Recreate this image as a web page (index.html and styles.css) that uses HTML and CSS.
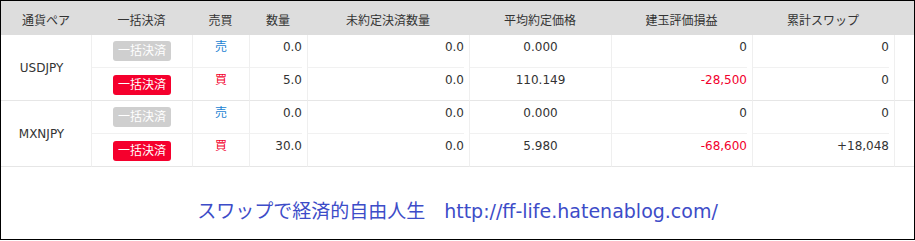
FILE: index.html
```html
<!DOCTYPE html>
<html lang="ja">
<head>
<meta charset="utf-8">
<title>建玉一覧</title>
<link rel="stylesheet" href="styles.css">
</head>
<body>
<div class="frame">
  <div class="grid">
    <div class="h">通貨ペア</div>
    <div class="h">一括決済</div>
    <div class="h">売買</div>
    <div class="h">数量</div>
    <div class="h">未約定決済数量</div>
    <div class="h">平均約定価格</div>
    <div class="h">建玉評価損益</div>
    <div class="h">累計スワップ</div>
    <div class="h"></div>

    <div class="pair">USDJPY</div>
    <div class="c top full"><span class="btn off">一括決済</span></div>
    <div class="c top full ctr sell">売</div>
    <div class="c top num">0.0</div>
    <div class="c top num">0.0</div>
    <div class="c top full ctr">0.000</div>
    <div class="c top num">0</div>
    <div class="c top num">0</div>
    <div class="c"></div>

    <div class="c bot"><span class="btn on">一括決済</span></div>
    <div class="c bot ctr buy">買</div>
    <div class="c bot num">5.0</div>
    <div class="c bot num">0.0</div>
    <div class="c bot ctr">110.149</div>
    <div class="c bot num neg">-28,500</div>
    <div class="c bot num">0</div>
    <div class="c bot"></div>

    <div class="pair">MXNJPY</div>
    <div class="c top full"><span class="btn off">一括決済</span></div>
    <div class="c top full ctr sell">売</div>
    <div class="c top num">0.0</div>
    <div class="c top num">0.0</div>
    <div class="c top full ctr">0.000</div>
    <div class="c top num">0</div>
    <div class="c top num">0</div>
    <div class="c"></div>

    <div class="c bot"><span class="btn on">一括決済</span></div>
    <div class="c bot ctr buy">買</div>
    <div class="c bot num">30.0</div>
    <div class="c bot num">0.0</div>
    <div class="c bot ctr">5.980</div>
    <div class="c bot num neg">-68,600</div>
    <div class="c bot num">+18,048</div>
    <div class="c bot"></div>
  </div>
  <p class="footer">スワップで経済的自由人生　http://ff-life.hatenablog.com/</p>
</div>
</body>
</html>
```
FILE: styles.css
```css
html, body {
  margin: 0;
  padding: 0;
  background: #fff;
}
body {
  width: 915px;
  height: 241px;
  font-family: "DejaVu Sans", "Noto Sans CJK JP", sans-serif;
  font-size: 12px;
  color: #333;
}
.frame {
  width: 915px;
  height: 240px;
  box-sizing: border-box;
  border: 1px solid #000;
}
.grid {
  display: grid;
  grid-template-columns: 90px 101px 57px 58px 162px 142px 141px 142px 1fr;
  grid-template-rows: 34px repeat(4, 33px);
}
.h {
  background: #dddddd;
  text-align: center;
  line-height: 17px;
  padding-top: 12px;
  box-sizing: border-box;
  color: #333;
}
.pair {
  grid-row: span 2;
  display: flex;
  align-items: center;
  justify-content: center;
  padding-right: 9px;
  border-bottom: 1px solid #e6e6e6;
  box-sizing: border-box;
}
.c {
  box-sizing: border-box;
  border-left: 1px solid #efefef;
  padding-top: 6px;
  line-height: 13px;
  text-align: center;
}
.c.top {
  background-image: linear-gradient(#f1f1f1, #f1f1f1);
  background-repeat: no-repeat;
  background-position: left bottom;
  background-size: calc(100% - 5px) 1px;
}
.c.top.full {
  background-size: 100% 1px;
}
.c.bot {
  border-bottom: 1px solid #e6e6e6;
}
.num {
  text-align: right;
  padding-right: 5px;
}
.ctr {
  text-align: center;
}
.sell {
  color: #1a7fd2;
}
.buy {
  color: #f2002d;
}
.neg {
  color: #f2002d;
}
.btn {
  display: inline-block;
  width: 58px;
  height: 20px;
  line-height: 20px;
  border-radius: 3px;
  color: #fff;
  text-align: center;
  font-size: 12px;
}
.btn.off {
  background: #cfcfcf;
}
.btn.on {
  background: #f5002d;
  margin-top: 1px;
}
.footer {
  margin: 31px 0 0;
  text-align: center;
  font-size: 19px;
  line-height: 26px;
  color: #3d4cc8;
}
```
